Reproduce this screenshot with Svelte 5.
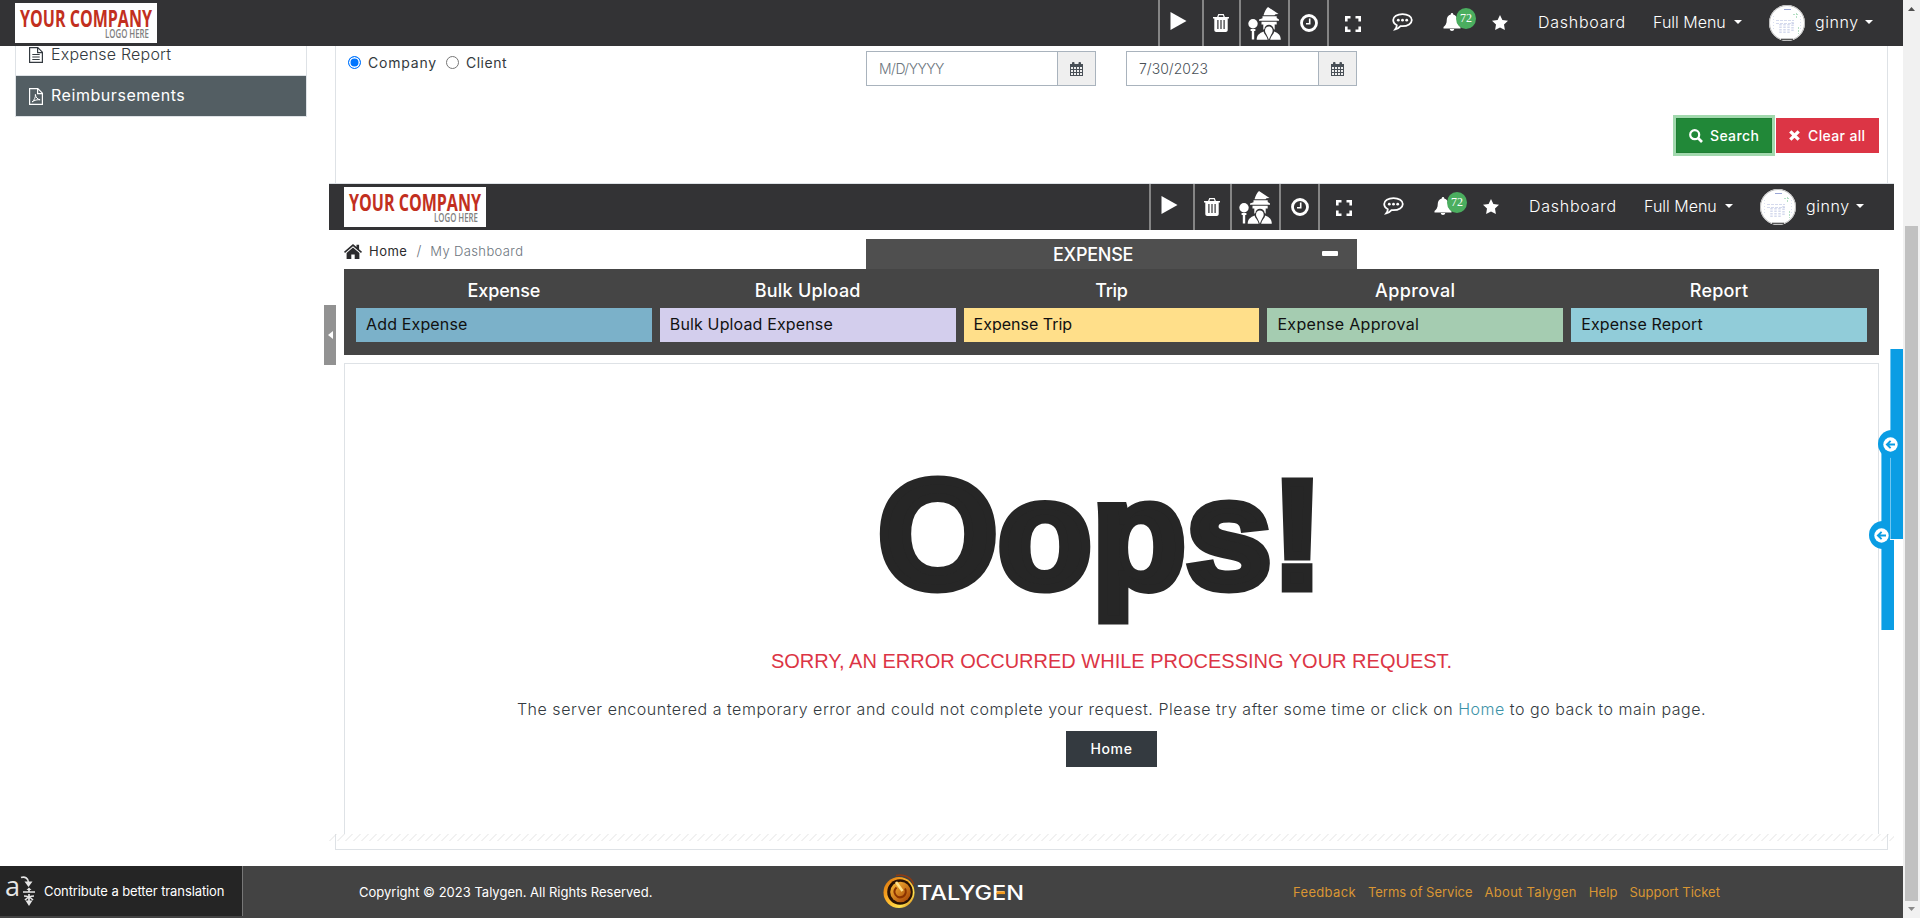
<script>
  const menu = [
    { title: 'Expense', item: 'Add Expense', tone: 'blue' },
    { title: 'Bulk Upload', item: 'Bulk Upload Expense', tone: 'lilac' },
    { title: 'Trip', item: 'Expense Trip', tone: 'yellow' },
    { title: 'Approval', item: 'Expense Approval', tone: 'green' },
    { title: 'Report', item: 'Expense Report', tone: 'teal' }
  ];
  const links = [
    { label: 'Feedback', cls: 'l1' },
    { label: 'Terms of Service', cls: 'l2' },
    { label: 'About Talygen', cls: 'l3' },
    { label: 'Help', cls: 'l4' },
    { label: 'Support Ticket', cls: 'l5' }
  ];
</script>

{#snippet topbar()}
  <header class="topbar">
    <svg class="brand" width="142" height="40" viewBox="0 0 142 40">
      <rect width="142" height="40" fill="#fff" />
      <text x="5" y="24" textLength="132" lengthAdjust="spacingAndGlyphs" class="brand-main">YOUR COMPANY</text>
      <text x="90" y="35" textLength="44" lengthAdjust="spacingAndGlyphs" class="brand-sub">LOGO HERE</text>
    </svg>
    <nav class="tools">
      <span class="cell line c-play"><svg width="17" height="18" viewBox="0 0 17 18"><path d="M.5 0 16.500 9 .5 18z" fill="#fff" /></svg></span>
      <span class="cell line c-trash">
        <svg width="16" height="18" viewBox="0 0 16 18"><path fill="#fff" fill-rule="evenodd" d="M5.300 0h5.400l1.200 3H16v1.500h-1.300V16c0 1.200-.8 2-1.900 2H3.200c-1.100 0-1.900-.8-1.900-2V4.500H0V3h4.100zM6 1.300 5.500 3h5L10 1.300zM4.300 6v9h1.200V6zm3.100 0v9h1.200V6zm3.100 0v9h1.200V6z" /></svg>
      </span>
      <span class="cell line c-wizard">
        <svg width="33" height="33" viewBox="0 0 33 33" fill="#fff">
          <path d="M20 0 30.500 7l-3 .3-1 1H15.500C16.500 4.500 18 2 20 0z" />
          <path d="M14.500 9.300h14.200V11l2.300 1.500v1.300H11v-1.300l3.500-1.300z" />
          <path d="M13.500 14.800h15.200v2.800h-2v5.200l-1-.8c-.3-2.300-2-4.200-4.700-4.200s-4.300 1.900-4.600 4.200l-1.100.8v-5.200h-1.800z" />
          <circle cx="5" cy="16.800" r="4.700" />
          <path d="M2.600 22h4.800v2H6.200v8.500H3.800V24H2.600z" />
          <path d="M20.900 19.500c2 0 3.800 1.600 3.800 4 0 2.700-2.300 4.500-3.800 9.300-1.500-4.800-3.900-6.600-3.900-9.300 0-2.400 1.800-4 3.900-4z" />
          <path d="M15.500 24.500c.6 3 3.500 4.500 4.200 8.300H8.700c0-4.600 2.800-6.600 6.800-8.300zM26.300 24.500c4 1.700 6.500 3.700 6.500 8.300h-10.700c.7-3.800 3.600-5.300 4.200-8.300z" />
        </svg>
      </span>
      <span class="cell line c-clock">
        <svg width="18" height="18" viewBox="0 0 18 18" fill="none" stroke="#fff"><circle cx="9" cy="9" r="7.500" stroke-width="2.800" /><path d="M9.700 4.500v5.200H6" stroke-width="1.600" /></svg>
      </span>
      <span class="cell line c-expand">
        <svg width="16" height="16" viewBox="0 0 16 16" fill="none" stroke="#fff" stroke-width="2.600"><path d="M1.300 5.500V1.300h4.200M10.500 1.300h4.200v4.200M14.700 10.500v4.200h-4.200M5.500 14.700H1.300v-4.200" /></svg>
      </span>
      <span class="cell c-chat">
        <svg width="21" height="18" viewBox="0 0 21 18"><path d="M10.500 1.100c5.200 0 9.300 2.600 9.300 6s-4.100 6.100-9.300 6.100c-.7 0-1.400 0-2-.1-1.500 1.700-3.600 3-5.300 3.300.8-1 1.500-2.300 1.600-4.200C2.500 11.100 1.200 9.300 1.200 7.100c0-3.400 4.100-6 9.300-6z" fill="none" stroke="#fff" stroke-width="1.800" /><g fill="#fff"><circle cx="6.300" cy="7.200" r="1.400" /><circle cx="10.500" cy="7.200" r="1.400" /><circle cx="14.700" cy="7.200" r="1.400" /></g></svg>
      </span>
      <span class="cell c-bell">
        <svg width="18" height="18" viewBox="0 0 18 18"><path fill="#fff" d="M9 0c.8 0 1.300.6 1.200 1.400 2.700.6 4 2.700 4 5.200 0 4 1.300 6 3.300 7.400v1.400H.5V14c2-1.400 3.300-3.400 3.300-7.400 0-2.500 1.300-4.600 4-5.200C7.700.6 8.200 0 9 0zM6.800 16h4.400c0 1.200-1 2-2.200 2s-2.200-.8-2.200-2z" /></svg>
        <b class="badge">72</b>
      </span>
      <span class="cell c-star">
        <svg width="16" height="15" viewBox="0 0 16 15"><path fill="#fff" d="m8 0 2.400 5 5.600.8-4 3.800.9 5.400L8 12.400 3.100 15l.9-5.400-4-3.800L5.600 5z" /></svg>
      </span>
      <span class="nav dash">Dashboard</span>
      <span class="nav full">Full Menu<i class="caret"></i></span>
      <svg class="avatar" width="36" height="36" viewBox="0 0 36 36">
        <circle cx="18" cy="18" r="18" fill="#fff" />
        <circle cx="18" cy="18" r="17.500" fill="none" stroke="#bbb" />
        <g stroke="#c3cbe6" fill="none"><path d="M15 4.500h7" stroke="#9aa6d6" /><path d="M7 15.500h18M7 18.500h18" stroke-dasharray="3 1" opacity=".7" /><path d="M11.500 19v10M15.500 19v10M19.500 19v10M23.500 17v10" stroke-width="2.500" stroke-dasharray="1.500 1" opacity=".7" /><path d="M24 9.500h6M27.500 8v6M29.500 22v7" stroke="#b5e0c4" stroke-dasharray="2 1" /><path d="M4.500 11v14M31.500 11v13" stroke-dasharray="1 2" opacity=".6" /></g>
        <path d="M12 34.300h12" stroke="#444" stroke-width="1.200" />
      </svg>
      <span class="nav user">ginny<i class="caret"></i></span>
    </nav>
  </header>
{/snippet}

{#snippet calendar()}
  <svg width="13" height="14" viewBox="0 0 13 14"><path fill="#495057" fill-rule="evenodd" d="M0 2h2V.8C2 .3 2.400 0 3 0h.6c.6 0 .9.3.9.8V2h4V.800C8.500.3 8.900 0 9.400 0h.6c.6 0 1 .3 1 .8V2h2v12H0zM1 5v2h2V5zm3 0v2h2V5zm3 0v2h2V5zm3 0v2h2V5zM1 8v2h2V8zm3 0v2h2V8zm3 0v2h2V8zm3 0v2h2V8zM1 11v2h2v-2zm3 0v2h2v-2zm3 0v2h2v-2zm3 0v2h2v-2z" /></svg>
{/snippet}

{#snippet drawer(cls)}
  <div class="drawer {cls}">
    <span class="knob">
      <svg width="15" height="15" viewBox="0 0 15 15"><circle cx="7.500" cy="7.500" r="7.200" fill="#fff" /><path d="M12 7.500H4M7.600 3.800 3.900 7.500l3.700 3.700" fill="none" stroke="#0a9de4" stroke-width="1.900" /></svg>
    </span>
  </div>
{/snippet}

<div class="window">
  <div class="page">
    {@render topbar()}

    <div class="body">
      <aside class="sidebar">
        <a class="side first" href="#report">
          <svg width="14" height="16" viewBox="0 0 14 16" fill="none" stroke="#343a40" stroke-width="1.200"><path d="M.6.600h8.200l4.600 4.600v10.200H.6zM8.600.800v4.800h4.700M3.300 7.500h7.400M3.300 10h7.400M3.300 12.500h7.400" /></svg>
          <span>Expense Report</span>
        </a>
        <a class="side active" href="#reimbursements">
          <svg width="14" height="17" viewBox="0 0 14 17" fill="none" stroke="#fff" stroke-width="1.200"><path d="M.6.600h8.200l4.600 4.600v11.200H.6zM8.600.800v4.800h4.700" /><path d="M3 14c2-1.500 3.800-4.700 3.400-7.600.3 3 2 4.800 4.700 5.400-2.700-.4-5.600.3-8.100 2.200z" stroke-width="1" /></svg>
          <span>Reimbursements</span>
        </a>
      </aside>

      <main class="panel">
        <section class="filters">
          <div class="fields">
            <div class="radios">
              <i class="radio on"></i><span class="company">Company</span>
              <i class="radio"></i><span class="client">Client</span>
            </div>
            <div class="date d1"><span class="value ph">M/D/YYYY</span><span class="addon">{@render calendar()}</span></div>
            <div class="date d2"><span class="value">7/30/2023</span><span class="addon">{@render calendar()}</span></div>
          </div>
          <div class="actions">
            <button class="search">
              <svg width="14" height="14" viewBox="0 0 14 14" fill="none" stroke="#fff"><circle cx="5.700" cy="5.700" r="4.500" stroke-width="2.200" /><path d="m9 9 4 4" stroke-width="2.600" /></svg>
              <span>Search</span>
            </button>
            <button class="clear">
              <svg width="11" height="11" viewBox="0 0 11 11" stroke="#fff" stroke-width="3.300"><path d="m1.300 1.300 8.400 8.400M9.700 1.300 1.300 9.700" /></svg>
              <span>Clear all</span>
            </button>
          </div>
        </section>

        <section class="nested">
          {@render topbar()}
          <div class="inner">
            <div class="crumbrow">
              <div class="crumbs">
                <svg width="18" height="15" viewBox="0 0 18 15" fill="#2b2b2d"><path d="M9 0 12.500 3V.8h2.600v4.500L18 7.800l-1 1.100L9 2.200 1 8.900 0 7.800z" /><path d="M9 3.500 15.400 9v6h-4.700v-4.500H7.300V15H2.600V9z" /></svg>
                <span class="home">Home</span><span class="slash">/</span><span class="current">My Dashboard</span>
              </div>
              <div class="tab"><span>EXPENSE</span><i class="minus"></i></div>
            </div>
            <div class="menu">
              {#each menu as m}
                <div class="col"><h3 class={m.tone}>{m.title}</h3><a class="tile {m.tone}" href="#menu">{m.item}</a></div>
              {/each}
            </div>
            <div class="error">
              <h1>Oops!</h1>
              <h2>SORRY, AN ERROR OCCURRED WHILE PROCESSING YOUR REQUEST.</h2>
              <p>The server encountered a temporary error and could not complete your request. Please try after some time or click on <a href="#home">Home</a> to go back to main page.</p>
              <button class="homebtn">Home</button>
            </div>
          </div>
          <div class="handle"><i></i></div>
          {@render drawer('low')}
        </section>
        <svg class="hatch" width="1565" height="7"><defs><pattern id="hatch" width="8" height="7" patternUnits="userSpaceOnUse"><path d="M.5 7 7.500 0" stroke="#dcdcdc" stroke-width=".8" /></pattern></defs><rect width="1565" height="7" fill="url(#hatch)" /></svg>
      </main>
    </div>

    <footer>
      <div class="contribute">
        <svg width="32" height="32" viewBox="0 0 32 32">
          <text x="-1" y="21" textLength="15" lengthAdjust="spacingAndGlyphs" class="glyph">a</text>
          <g fill="none" stroke="#e6e6e6" stroke-width="1.700"><path d="M15 2.500c4-1.500 7.500 1 7.500 5M17 17h12M23 14v3M18 21c4 0 8 3 9 4M28 21c-4 0-8 3-9 4M23 19v10" /></g>
          <path d="M18.500 6.500h8L22.500 12zM19.500 25.500h7L23 31zM20.500 15h5L23 12.500z" fill="#e6e6e6" />
        </svg>
        <span>Contribute a better translation</span>
      </div>
      <span class="copy">Copyright © 2023 Talygen. All Rights Reserved.</span>
      <svg class="talygen" width="142" height="36" viewBox="0 0 142 36">
        <defs>
          <linearGradient id="ring" x1="0" y1="0" x2="1" y2="1"><stop offset="0" stop-color="#d66b08" /><stop offset=".45" stop-color="#ffb52a" /><stop offset=".75" stop-color="#ffe24d" /><stop offset="1" stop-color="#b84a00" /></linearGradient>
          <linearGradient id="core" x1="0" y1="0" x2="1" y2="1"><stop offset="0" stop-color="#ffc13a" /><stop offset="1" stop-color="#a03a00" /></linearGradient>
        </defs>
        <circle cx="16" cy="18.500" r="15.500" fill="url(#ring)" />
        <circle cx="17" cy="18" r="12.800" fill="#2a1204" />
        <circle cx="17.500" cy="18" r="10.300" fill="url(#core)" />
        <path d="M13.500 13.500c-5 5 .5 12 6.500 9 3-1.600 3.600-5.500 2-8" fill="none" stroke="#8a3200" stroke-width="2" />
        <path d="m13 8 6.500 9" stroke="#ffe08a" stroke-width="2.600" />
        <path d="M13 1.500c8-2 16 2 17.500 9" fill="none" stroke="#8e3a12" stroke-width="1.500" />
        <text x="34" y="26" textLength="107" lengthAdjust="spacingAndGlyphs" class="wordmark">TALYGEN</text>
        <rect x="113.500" y="17.300" width="8.500" height="2.800" fill="#f39a1d" />
      </svg>
      <nav class="links">
        {#each links as l}<a class={l.cls} href="#footer">{l.label}</a>{/each}
      </nav>
    </footer>
    {@render drawer('high')}
  </div>

  <div class="scroll">
    <svg width="7" height="4" viewBox="0 0 7 4"><path d="M0 4 3.500 0 7 4z" fill="#505050" /></svg>
    <i class="thumb"></i>
    <svg width="7" height="4" viewBox="0 0 7 4"><path d="M0 0h7L3.500 4z" fill="#8b8b8b" /></svg>
  </div>
</div>

<style>
  :global(body) { margin: 0; background: #fff; }
  * { box-sizing: border-box; }
  .window { display: flex; width: 1920px; height: 918px; overflow: hidden; font-family: Inter, 'Open Sans', sans-serif; color: #343a40; }
  svg { display: block; flex: none; }
  a { text-decoration: none; color: inherit; }
  button { font-family: inherit; border: 0; padding: 0; border-radius: 0; }
  .page { position: relative; width: 1903px; display: flex; flex-direction: column; }

  .topbar { height: 46px; flex: none; background: #333335; display: flex; justify-content: space-between; align-items: center; padding-left: 15px; }
  .brand { overflow: visible; }
  .brand-main { font: 700 23.500px 'Open Sans', sans-serif; fill: #c22f20; }
  .brand-sub { font: 600 13px 'Open Sans', sans-serif; fill: #808080; }
  .tools { display: flex; height: 46px; align-items: center; padding-right: 29px; color: #fff; }
  .cell { height: 46px; display: flex; align-items: center; justify-content: center; }
  .line { border-left: 2px solid #858585; }
  .c-play { width: 44px; padding: 0 5px 4px 0; }
  .c-trash { width: 37px; padding-right: 1px; }
  .c-wizard { width: 49px; padding-right: 1px; }
  .c-clock { width: 39px; padding-left: 1px; }
  .c-expand { width: 51px; padding: 2px 2px 0 0; }
  .c-chat { width: 49px; padding-bottom: 2px; }
  .c-bell { width: 57px; justify-content: flex-start; padding: 0 0 3px 16px; }
  .c-star { width: 32px; padding-bottom: 2px; }
  .badge { width: 20px; height: 21px; margin: -7px 0 0 -5px; border-radius: 50%; background: #4bae5f; font: 400 12px/21px 'Liberation Serif', serif; text-align: center; }
  .nav { height: 24px; margin-bottom: 2px; font-size: 16px; font-weight: 300; line-height: 24px; display: flex; align-items: center; white-space: nowrap; }
  .dash { width: 137px; padding-left: 22px; letter-spacing: .75px; }
  .full { width: 116px; }
  .user { margin-left: 10px; width: 59px; padding-right: 1px; letter-spacing: .6px; justify-content: space-between; }
  .caret { border: 4px solid transparent; border-top-color: #fff; border-bottom: 0; margin-bottom: 1px; }
  .full .caret { margin-left: 8px; }

  .body { flex: 1; display: flex; align-items: flex-start; padding: 0 15px; min-height: 0; }
  .sidebar { width: 292px; margin-right: 28px; }
  .side { display: flex; gap: 8px; padding-left: 13px; border: 1px solid #dee2e6; border-top: 0; font-size: 16px; }
  .first { height: 30px; line-height: 16px; font-weight: 300; letter-spacing: .2px; }
  .first svg { margin-top: 1px; }
  .active { height: 41px; align-items: center; background: #535e63; color: #fff; letter-spacing: .55px; }
  .active span { margin-bottom: 2px; }

  .panel { width: 1553px; height: 804px; border: 1px solid #dee2e6; border-top: 0; display: flex; flex-direction: column; flex: none; }
  .filters { height: 137px; padding: 5px 8px 0 12px; font-size: 14px; }
  .fields { display: flex; height: 35px; }
  .radios { width: 518px; height: 22px; display: flex; align-items: center; }
  .radio { width: 13px; height: 13px; border: 1px solid #767676; border-radius: 50%; }
  .radio.on { border-color: #0075ff; background: #0075ff; box-shadow: inset 0 0 0 1.500px #fff; }
  .company { margin: 0 9px 0 7px; letter-spacing: .8px; }
  .client { margin-left: 7px; letter-spacing: .5px; }
  .date { display: flex; width: 230px; height: 35px; border: 1px solid #a9b3bd; }
  .d2 { width: 231px; margin-left: 30px; }
  .value { flex: 1; padding-left: 12px; line-height: 33px; font-weight: 300; color: #495057; }
  .ph { color: #6c757d; letter-spacing: -.55px; }
  .addon { width: 38px; background: #efefef; border-left: 1px solid #a9b3bd; display: flex; align-items: center; justify-content: center; }
  .actions { display: flex; justify-content: flex-end; gap: 4px; margin-top: 32px; }
  .actions button { height: 35px; display: flex; align-items: center; color: #fff; font-size: 14px; font-weight: 500; letter-spacing: .36px; }
  .actions span { margin-bottom: 1px; }
  .search { width: 96px; padding-left: 12px; gap: 7px; background: #218838; border: 1px solid #1e7e34; box-shadow: 0 0 0 3px #a2d9ae; }
  .clear { width: 103px; padding-left: 13px; gap: 8px; background: #dc3545; }

  .nested { position: relative; height: 651px; margin: 0 -7px; border-top: 1px solid #dee2e6; background: #fff; flex: none; }
  .inner { padding: 0 15px; }
  .crumbrow { height: 39px; display: flex; align-items: flex-end; }
  .crumbs { width: 522px; display: flex; align-items: center; height: 34px; font-size: 13px; padding-bottom: 2px; }
  .crumbs span { margin-bottom: 1px; }
  .crumbs .home { margin-left: 7px; letter-spacing: .5px; color: #2b2b2d; }
  .crumbs .slash { margin: 0 9px 1px; color: #6c757d; font-size: 14px; font-weight: 300; }
  .current { color: #6c757d; font-weight: 300; letter-spacing: .37px; }
  .tab { width: 491px; height: 30px; padding-left: 187px; background: #4f4f4f; color: #fff; display: flex; justify-content: space-between; align-items: center; font-size: 18px; font-weight: 500; letter-spacing: -.25px; }
  .minus { width: 16px; height: 5px; background: #fff; border-radius: 1px; margin: 0 19px 2px 0; }
  .menu { height: 86px; padding: 9px 12px 0; background: #454545; display: grid; grid-template-columns: repeat(5, 1fr); column-gap: 8px; }
  .menu h3 { margin: 0; height: 30px; line-height: 26px; font-size: 18px; font-weight: 500; text-align: center; color: #fff; }
  h3.blue { letter-spacing: -.15px; }
  h3.lilac { letter-spacing: .24px; }
  h3.yellow { letter-spacing: -.3px; }
  h3.green { letter-spacing: .42px; }
  h3.teal { letter-spacing: .2px; }
  .tile { display: block; height: 34px; line-height: 32px; padding-left: 10px; font-size: 16px; color: #111; }
  .tile.blue { background: #7bb1c9; letter-spacing: .15px; }
  .tile.lilac { background: #d3ceed; letter-spacing: .14px; }
  .tile.yellow { background: #ffdf8a; }
  .tile.green { background: #a5ccb1; letter-spacing: .32px; }
  .tile.teal { background: #91ccd9; letter-spacing: .15px; }

  .error { margin-top: 8px; height: 471px; border: 1px solid #dee2e6; border-bottom: 0; padding-top: 91px; display: flex; flex-direction: column; align-items: center; }
  .error h1 { margin: 0; padding-right: 22px; font: 700 154px/160px 'Liberation Sans', Arial, sans-serif; color: #262626; -webkit-text-stroke: 9px #262626; }
  .error h2 { margin: 31px 0 0; font: 400 20px/30px 'Liberation Sans', Arial, sans-serif; color: #dc3545; }
  .error p { margin: 21px 0 0; font-size: 16px; line-height: 24px; font-weight: 300; letter-spacing: .52px; }
  .error p a { color: #3d93a8; }
  .homebtn { margin-top: 10px; width: 91px; height: 36px; padding-bottom: 2px; background: #343a40; color: #fff; font-size: 14px; font-weight: 500; letter-spacing: .6px; }

  .handle { position: absolute; left: -5px; top: 121px; width: 12px; height: 60px; background: #929292; display: flex; align-items: center; justify-content: center; }
  .handle i { border: 4px solid transparent; border-right: 5px solid #fff; border-left: 0; }
  .hatch { margin-left: -7px; }

  .drawer { position: absolute; width: 13px; height: 190px; background: #0a9de4; border-left: 1px solid #70c6f0; display: flex; align-items: center; }
  .low { right: 0; top: 256px; }
  .high { right: 0; top: 349px; box-shadow: 0 1px #fff; }
  .knob { flex: none; width: 25px; height: 28px; margin-left: -13px; padding-left: 5px; border-radius: 14px 0 0 14px; background: #0a9de4; display: flex; align-items: center; }

  footer { height: 52px; flex: none; background: #434343; display: flex; align-items: center; font-size: 13px; color: #fff; }
  .contribute { width: 243px; height: 50px; align-self: flex-start; background: #252525; border-right: 1px solid #777; display: flex; align-items: center; gap: 6px; padding-left: 6px; letter-spacing: -.1px; }
  .contribute svg { overflow: visible; }
  .contribute span { margin-bottom: 1px; }
  .glyph { font: 400 28px 'Open Sans', sans-serif; fill: #e6e6e6; }
  .copy { margin-left: 116px; width: 524px; }
  .wordmark { font: 500 20px Inter, sans-serif; fill: #fff; }
  .links { margin-left: 268px; display: flex; gap: 12px; color: #d99633; }
  .l1 { letter-spacing: .33px; }
  .l3 { letter-spacing: .28px; }
  .l4 { letter-spacing: .1px; }

  .scroll { width: 17px; background: #f1f1f1; display: flex; flex-direction: column; align-items: center; padding-top: 7px; }
  .thumb { width: 13px; height: 675px; margin: 215px 0 6px; background: #c1c1c1; }
</style>
